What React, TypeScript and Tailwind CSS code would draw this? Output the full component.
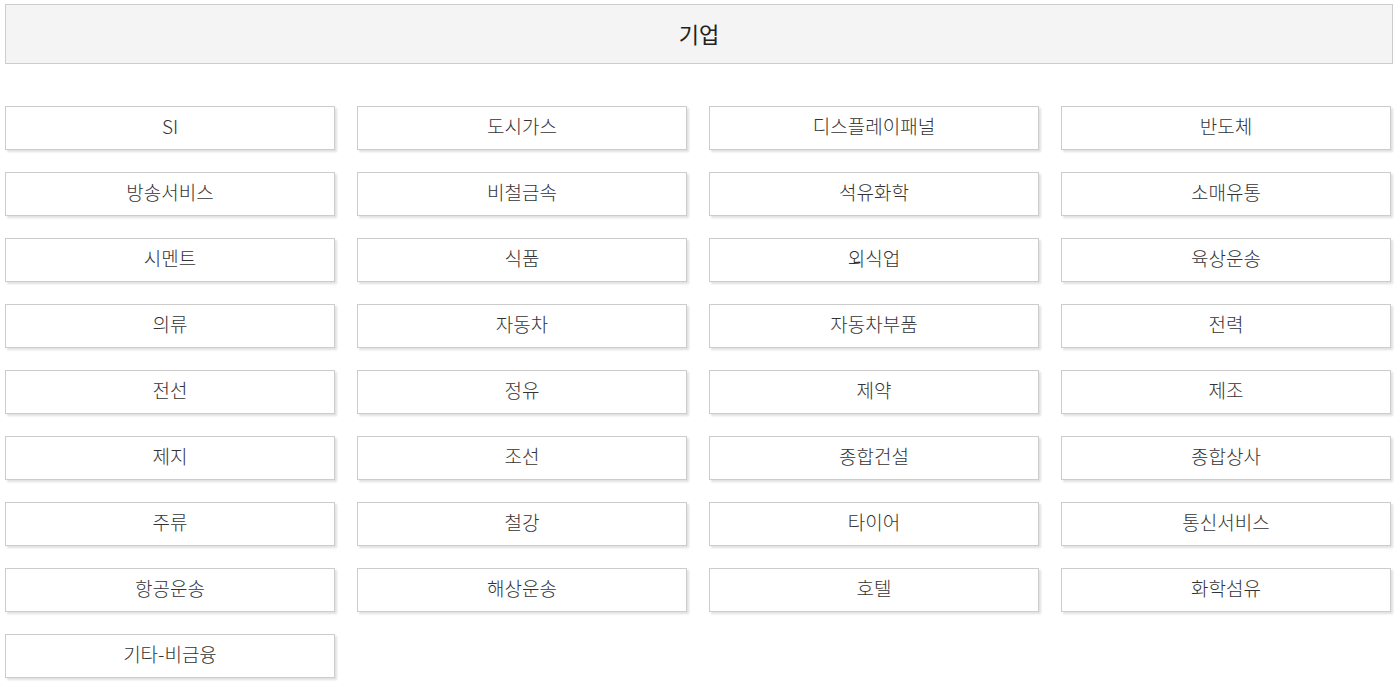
const items = [
  "SI", "도시가스", "디스플레이패널", "반도체",
  "방송서비스", "비철금속", "석유화학", "소매유통",
  "시멘트", "식품", "외식업", "육상운송",
  "의류", "자동차", "자동차부품", "전력",
  "전선", "정유", "제약", "제조",
  "제지", "조선", "종합건설", "종합상사",
  "주류", "철강", "타이어", "통신서비스",
  "항공운송", "해상운송", "호텔", "화학섬유",
  "기타-비금융",
];

export default function App() {
  return (
    <div
      className="min-h-screen bg-white pl-[5px] pr-[6px] pt-[4px] text-[#333]"
      style={{ fontFamily: '"Noto Sans CJK KR", "Noto Sans", sans-serif' }}
    >
      <div className="flex h-[60px] items-center justify-center border border-[#ccc] bg-[#f4f4f4] pb-[2px] text-[22px] text-[#222]">
        기업
      </div>
      <div className="mt-[42px] grid w-[1386px] grid-cols-4 gap-x-[22px] gap-y-[22px]">
        {items.map((name) => (
          <button
            key={name}
            className="flex h-[44px] items-center justify-center border border-[#ccc] bg-white pb-[4px] text-[19px] font-light shadow-[2px_2px_2px_rgba(0,0,0,0.12)]"
          >
            {name}
          </button>
        ))}
      </div>
    </div>
  );
}
